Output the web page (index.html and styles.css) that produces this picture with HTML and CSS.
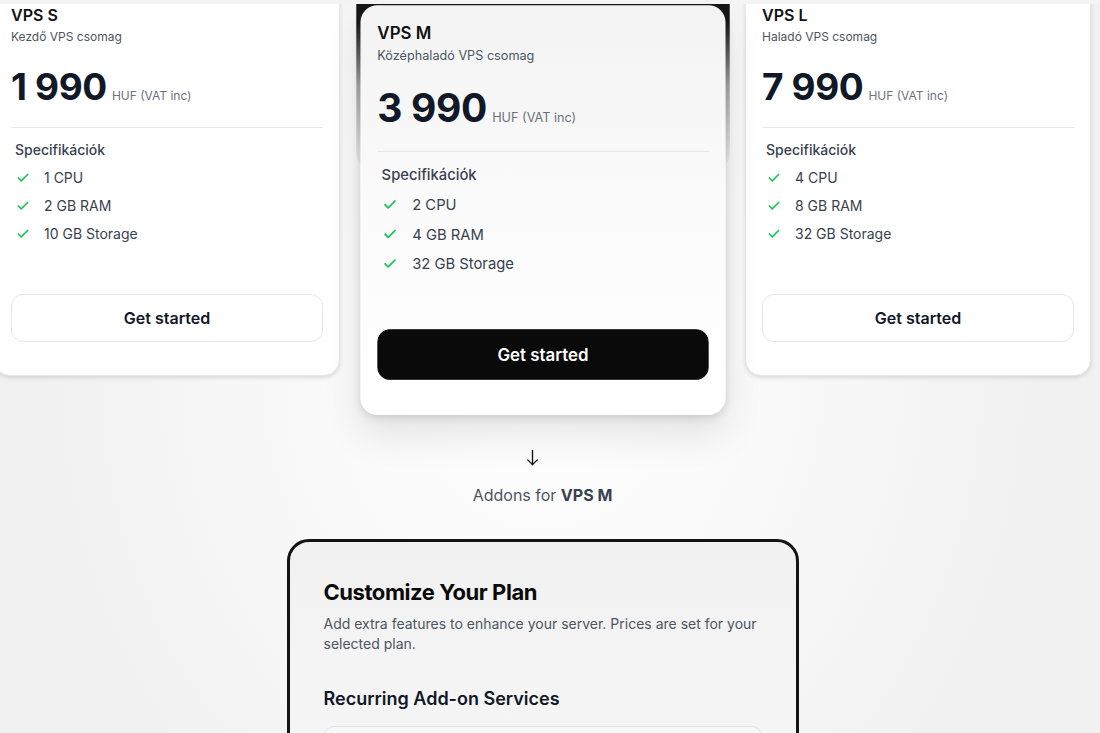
FILE: index.html
```html
<!DOCTYPE html>
<html lang="hu">
<head>
  <meta charset="UTF-8" />
  <meta name="viewport" content="width=device-width, initial-scale=1.0" />
  <title>VPS csomagok</title>
  <link rel="stylesheet" href="styles.css">
</head>
<body>
  <div class="topbar"></div>
  <div class="page">
    <div class="plans">
      <div class="plan">
        <h3 class="plan-name">VPS S</h3>
        <p class="plan-desc">Kezdő VPS csomag</p>
        <div class="price"><span class="amount">1 990</span><span class="unit">HUF (VAT inc)</span></div>
        <hr class="divider">
        <h4 class="spec-title">Specifikációk</h4>
        <ul class="specs">
          <li><svg viewBox="0 0 24 24"><path d="M20 6 9 17l-5-5"/></svg>1 CPU</li>
          <li><svg viewBox="0 0 24 24"><path d="M20 6 9 17l-5-5"/></svg>2 GB RAM</li>
          <li><svg viewBox="0 0 24 24"><path d="M20 6 9 17l-5-5"/></svg>10 GB Storage</li>
        </ul>
        <button class="btn">Get started</button>
      </div>

      <div class="featured-wrap">
        <div class="plan featured">
          <h3 class="plan-name">VPS M</h3>
          <p class="plan-desc">Középhaladó VPS csomag</p>
          <div class="price"><span class="amount">3 990</span><span class="unit">HUF (VAT inc)</span></div>
          <hr class="divider">
          <h4 class="spec-title">Specifikációk</h4>
          <ul class="specs">
            <li><svg viewBox="0 0 24 24"><path d="M20 6 9 17l-5-5"/></svg>2 CPU</li>
            <li><svg viewBox="0 0 24 24"><path d="M20 6 9 17l-5-5"/></svg>4 GB RAM</li>
            <li><svg viewBox="0 0 24 24"><path d="M20 6 9 17l-5-5"/></svg>32 GB Storage</li>
          </ul>
          <button class="btn btn-dark">Get started</button>
        </div>
      </div>

      <div class="plan">
        <h3 class="plan-name">VPS L</h3>
        <p class="plan-desc">Haladó VPS csomag</p>
        <div class="price"><span class="amount">7 990</span><span class="unit">HUF (VAT inc)</span></div>
        <hr class="divider">
        <h4 class="spec-title">Specifikációk</h4>
        <ul class="specs">
          <li><svg viewBox="0 0 24 24"><path d="M20 6 9 17l-5-5"/></svg>4 CPU</li>
          <li><svg viewBox="0 0 24 24"><path d="M20 6 9 17l-5-5"/></svg>8 GB RAM</li>
          <li><svg viewBox="0 0 24 24"><path d="M20 6 9 17l-5-5"/></svg>32 GB Storage</li>
        </ul>
        <button class="btn">Get started</button>
      </div>
    </div>

    <div class="addons-link">
      <svg class="arrow" viewBox="0 0 24 24"><path d="M12 3v18"/><path d="m18 15-6 6-6-6"/></svg>
      <p>Addons for <strong>VPS M</strong></p>
    </div>

    <div class="customize">
      <h2>Customize Your Plan</h2>
      <p class="lead">Add extra features to enhance your server. Prices are set for your selected plan.</p>
      <h3>Recurring Add-on Services</h3>
      <div class="addon-box"></div>
    </div>
  </div>
</body>
</html>
```

FILE: styles.css
```css
body {
  margin: 0;
  font-family: Inter, 'Noto Sans', sans-serif;
  color: #111827;
  background: radial-gradient(ellipse 45% 80% at 542px 50%, #ffffff 0%, #f8f8f8 55%, #f1f1f1 100%);
  overflow: hidden;
  height: 100vh;
}
.topbar {
  position: fixed;
  top: 0;
  left: 0;
  right: 0;
  height: 4px;
  background: #f4f4f4;
  z-index: 10;
}
.page {
  width: 1085px;
}
.plans {
  display: grid;
  grid-template-columns: repeat(3, 346px);
  gap: 29.5px;
  width: 1097px;
  margin: -12px 0 0 -6px;
}
.plan {
  display: flex;
  flex-direction: column;
  height: 388px;
  box-sizing: border-box;
  padding: 16px 16px 33px;
  background: #fff;
  border: 1px solid #e6e6e6;
  border-radius: 16px;
  box-shadow: 0 2px 4px rgba(0,0,0,0.12);
}
.featured-wrap {
  position: relative;
  transform: translateY(28px) scale(1.055);
  z-index: 1;
}
.featured-wrap::before {
  content: '';
  position: absolute;
  top: -60px;
  left: -4px;
  right: -4px;
  height: 220px;
  border-radius: 20px;
  background: linear-gradient(180deg, #0e0e0e 0%, #1a1a1a 35%, rgba(90,90,90,0.5) 62%, rgba(220,220,220,0) 100%);
  z-index: -1;
}
.featured {
  border: none;
  background: linear-gradient(180deg, #f3f3f3 0%, #fbfbfb 50%, #ffffff 100%);
  box-shadow: 0 18px 36px rgba(0,0,0,0.10), 0 3px 8px rgba(0,0,0,0.12);
}
.plan-name {
  margin: 0;
  font-size: 16px;
  line-height: 20px;
  font-weight: 600;
  color: #111;
}
.plan-desc {
  margin: 4px 0 0;
  font-size: 12px;
  line-height: 16px;
  color: #4b5563;
}
.price {
  display: flex;
  align-items: baseline;
  gap: 5px;
  margin-top: 22px;
  height: 40px;
}
.amount {
  font-size: 37px;
  line-height: 40px;
  font-weight: 700;
  letter-spacing: -0.01em;
  color: #111827;
}
.unit {
  font-size: 12px;
  color: #6b7280;
}
.divider {
  margin: 20px 0 0;
  border: none;
  border-top: 1px solid #e5e7eb;
}
.spec-title {
  margin: 12px 0 0 4px;
  font-size: 14px;
  line-height: 20px;
  font-weight: 500;
  color: #374151;
}
.specs {
  list-style: none;
  margin: 8px 0 0 5px;
  padding: 0;
  display: flex;
  flex-direction: column;
  gap: 8px;
}
.specs li {
  display: flex;
  align-items: center;
  gap: 14px;
  font-size: 14px;
  line-height: 20px;
  color: #374151;
}
.specs svg {
  width: 14px;
  height: 14px;
  fill: none;
  stroke: #22c55e;
  stroke-width: 3;
  stroke-linecap: round;
  stroke-linejoin: round;
}
.btn {
  margin-top: auto;
  height: 48px;
  border: 1px solid #e5e7eb;
  border-radius: 12px;
  background: #fff;
  font-family: inherit;
  font-size: 16px;
  font-weight: 600;
  color: #111827;
  cursor: pointer;
}
.btn-dark {
  background: #0a0a0a;
  border-color: #0a0a0a;
  color: #fff;
}
.addons-link {
  display: flex;
  flex-direction: column;
  align-items: center;
  margin-top: 72px;
}
.arrow {
  width: 19px;
  height: 19px;
  margin-right: 20px;
  fill: none;
  stroke: #111;
  stroke-width: 1.7;
  stroke-linecap: round;
  stroke-linejoin: round;
}
.addons-link p {
  margin: 16px 0 0;
  font-size: 16px;
  line-height: 24px;
  color: #4b5563;
}
.addons-link strong {
  color: #374151;
  font-weight: 700;
}
.customize {
  width: 512px;
  box-sizing: border-box;
  margin: 32px auto 0;
  padding: 36px 34px 40px;
  border: 3px solid #141414;
  border-radius: 22px;
  background: linear-gradient(180deg, #f1f1f1 0%, #f4f4f4 40%, #f6f6f6 100%);
}
.customize h2 {
  margin: 0;
  font-size: 22px;
  line-height: 28px;
  font-weight: 700;
  letter-spacing: -0.02em;
  color: #0a0a0a;
}
.lead {
  margin: 8px 0 0;
  font-size: 14px;
  line-height: 20px;
  color: #4b5563;
}
.customize h3 {
  margin: 31px 0 0;
  font-size: 18px;
  line-height: 28px;
  font-weight: 600;
  color: #111827;
}
.addon-box {
  margin-top: 13px;
  height: 80px;
  border: 1px solid #dde3ee;
  border-radius: 10px;
  background: #f7f7f8;
}
```
